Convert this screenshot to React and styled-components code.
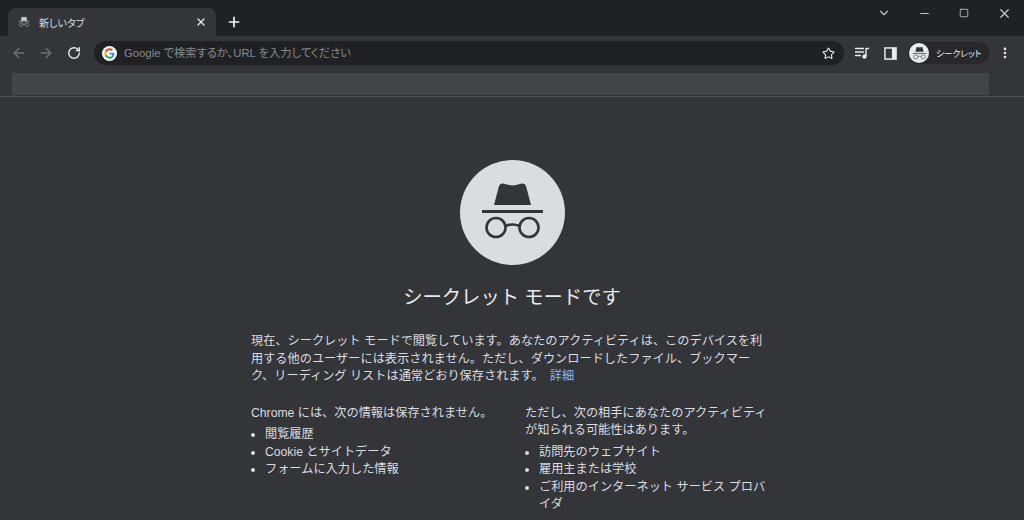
import styled, { createGlobalStyle } from 'styled-components';
import { ArrowLeft, ArrowRight, RotateCw, X, Plus, ChevronDown, Minus, Square, Star, MoreVertical } from 'lucide-react';

const GlobalStyle = createGlobalStyle`
  html, body {
    margin: 0;
    padding: 0;
    background: #343538;
  }
  body {
    font-family: "Liberation Sans", "Noto Sans CJK JP", sans-serif;
  }
`;

const Window = styled.div`
  width: 1024px;
  height: 520px;
  overflow: hidden;
  display: flex;
  flex-direction: column;
  background: #343538;
`;

// Title strip
const TabStrip = styled.div`
  height: 36px;
  flex-shrink: 0;
  background: #202124;
  display: flex;
  align-items: flex-end;
  padding-left: 8px;
`;

const Tab = styled.div`
  width: 208px;
  height: 28px;
  box-sizing: border-box;
  background: #343538;
  border-radius: 8px 8px 0 0;
  display: flex;
  align-items: center;
  padding: 0 9px 0 10px;
  gap: 9px;
`;

const TabTitle = styled.span`
  flex: 1;
  font-size: 10px;
  font-feature-settings: "palt";
  color: #dadce0;
`;

const NewTab = styled.div`
  width: 28px;
  height: 28px;
  margin-left: 4px;
  display: flex;
  align-items: center;
  justify-content: center;
  color: #f1f3f4;
`;

const WindowControls = styled.div`
  margin-left: auto;
  align-self: flex-start;
  display: flex;
  color: #c4c7c9;
`;

const WindowButton = styled.div`
  width: 40px;
  height: 26px;
  display: flex;
  align-items: center;
  justify-content: center;
`;

// Toolbar
const Toolbar = styled.div`
  height: 34px;
  flex-shrink: 0;
  display: flex;
  align-items: center;
  padding-left: 5px;
`;

const NavButton = styled.div`
  width: 27.5px;
  height: 28px;
  display: flex;
  align-items: center;
  justify-content: center;
  color: ${({ $disabled }) => ($disabled ? '#6f7276' : '#e8eaed')};
`;

const Omnibox = styled.div`
  width: 750px;
  height: 24px;
  margin-left: 6.5px;
  margin-right: 4px;
  box-sizing: border-box;
  border-radius: 12px;
  background: #202124;
  display: flex;
  align-items: center;
  padding: 0 9px 0 8px;
  gap: 7px;
`;

const OmniboxText = styled.span`
  flex: 1;
  padding-bottom: 2px;
  font-size: 11.3px;
  font-feature-settings: "palt";
  color: #85888c;
  white-space: nowrap;
`;

const ToolIcon = styled.div`
  width: 28px;
  height: 26px;
  flex-shrink: 0;
  display: flex;
  align-items: center;
  justify-content: center;
  color: #e8eaed;
`;

const ProfileChip = styled.div`
  height: 22px;
  width: 81px;
  margin: 0 2px 0 4px;
  box-sizing: border-box;
  border-radius: 11px;
  background: #27282b;
  display: flex;
  align-items: center;
  gap: 7px;
`;

const ProfileAvatar = styled.div`
  width: 20px;
  height: 20px;
  margin-left: 1px;
  border-radius: 50%;
  background: #e8eaed;
  display: flex;
  align-items: center;
  justify-content: center;
  flex-shrink: 0;
`;

const ProfileName = styled.span`
  font-size: 8.7px;
  font-feature-settings: "palt";
  color: #e8eaed;
  white-space: nowrap;
`;

// Bookmark bar
const BookmarkBar = styled.div`
  height: 27px;
  flex-shrink: 0;
  box-sizing: border-box;
  padding: 3px 35px 1px 12px;
  border-bottom: 1px solid #4d4e51;
`;

const BookmarkPlaceholder = styled.div`
  height: 22px;
  background: #434447;
`;

// Page
const Page = styled.main`
  flex: 1;
  display: flex;
  flex-direction: column;
  align-items: center;
  padding-top: 63px;
`;

const HeroCircle = styled.div`
  width: 105px;
  height: 105px;
  border-radius: 50%;
  background: #dadce0;
  display: flex;
  align-items: center;
  justify-content: center;
`;

const Title = styled.h1`
  margin: 19px 0 0;
  font-size: 19.3px;
  line-height: 28px;
  font-weight: 400;
  color: #e8eaed;
`;

const Content = styled.div`
  width: 522px;
  margin-top: 21px;
  font-size: 12.2px;
  line-height: 17.5px;
  color: #dadce0;
`;

const Intro = styled.p`
  margin: 0;
  width: 516px;
`;

const Link = styled.a`
  color: #8ab4f8;
  margin-left: 6px;
`;

const Columns = styled.div`
  display: grid;
  grid-template-columns: 274px 248px;
  margin-top: 19px;
`;

const Lead = styled.div`
  margin-bottom: 4px;
`;

const BulletList = styled.ul`
  margin: 0;
  padding: 0 0 0 14px;
`;

const Bullet = styled.li`
  padding: 0;
`;

const SpyIcon = ({ size, color = '#343538' }) => (
  <svg width={size} height={size} viewBox="19 19 67 67" fill="none">
    <path d="M34 45 L39 26 Q40 23 43 23.500 L49 25 Q52.500 25.800 56 25 L62 23.500 Q65 23 66 26 L71 45 Z" fill={color} />
    <rect x="22" y="50" width="61" height="3" fill={color} />
    <circle cx="36" cy="67.500" r="9.500" stroke={color} strokeWidth="2.600" />
    <circle cx="69" cy="67.500" r="9.500" stroke={color} strokeWidth="2.600" />
    <path d="M45.500 66 Q52.500 63 59.500 66" stroke={color} strokeWidth="2.600" />
  </svg>
);

const GoogleG = () => (
  <svg width="15" height="15" viewBox="0 0 48 48">
    <circle cx="24" cy="24" r="24" fill="#fff" />
    <g transform="translate(7.2 7.2) scale(.7)">
      <path fill="#ea4335" d="M24 9.5c3.5 0 6.700 1.200 9.200 3.600l6.900-6.900C35.900 2.400 30.500 0 24 0 14.600 0 6.500 5.400 2.600 13.200l8 6.200C12.400 13.700 17.700 9.500 24 9.500z" />
      <path fill="#4285f4" d="M46.900 24.500c0-1.600-.1-3.100-.4-4.500H24v9h12.900c-.6 3-2.200 5.500-4.800 7.200l7.700 6c4.500-4.200 7.100-10.300 7.100-17.700z" />
      <path fill="#fbbc05" d="M10.500 28.600c-.5-1.400-.8-3-.8-4.600s.3-3.200.8-4.600l-8-6.200C.9 16.500 0 20.100 0 24s.9 7.500 2.600 10.800l7.900-6.200z" />
      <path fill="#34a853" d="M24 48c6.500 0 11.900-2.100 15.900-5.800l-7.700-6c-2.200 1.400-4.900 2.300-8.200 2.300-6.300 0-11.600-4.200-13.500-9.900l-8 6.200C6.500 42.600 14.600 48 24 48z" />
    </g>
  </svg>
);

const MediaIcon = () => (
  <svg width="16" height="16" viewBox="0 0 16 16" fill="none" stroke="#e8eaed" strokeWidth="1.4">
    <path d="M1 3.500h9M1 7h9M1 10.500h6" />
    <path d="M12 3v8" />
    <path d="M12 3.500h3" />
    <circle cx="10.500" cy="11.500" r="1.500" fill="#e8eaed" />
  </svg>
);

const SidePanelIcon = () => (
  <svg width="13" height="13" viewBox="0 0 14 14" fill="none">
    <rect x="1" y="1" width="12" height="12" stroke="#e8eaed" strokeWidth="1.6" />
    <rect x="8.500" y="1" width="4.500" height="12" fill="#e8eaed" />
  </svg>
);

const leftItems = ['閲覧履歴', 'Cookie とサイトデータ', 'フォームに入力した情報'];
const rightItems = ['訪問先のウェブサイト', '雇用主または学校', 'ご利用のインターネット サービス プロバイダ'];

export default function App() {
  return (
    <>
      <GlobalStyle />
      <Window>
        <TabStrip>
          <Tab>
            <SpyIcon size={12} color="#c8cacd" />
            <TabTitle>新しいタブ</TabTitle>
            <X size={12} color="#e8eaed" strokeWidth={2.5} />
          </Tab>
          <NewTab>
            <Plus size={16} strokeWidth={2.5} />
          </NewTab>
          <WindowControls>
            <WindowButton><ChevronDown size={14} /></WindowButton>
            <WindowButton><Minus size={13} /></WindowButton>
            <WindowButton><Square size={10} /></WindowButton>
            <WindowButton><X size={15} /></WindowButton>
          </WindowControls>
        </TabStrip>

        <Toolbar>
          <NavButton $disabled><ArrowLeft size={16} /></NavButton>
          <NavButton $disabled><ArrowRight size={16} /></NavButton>
          <NavButton><RotateCw size={14} strokeWidth={2.4} /></NavButton>
          <Omnibox>
            <GoogleG />
            <OmniboxText>Google で検索するか、URL を入力してください</OmniboxText>
            <Star size={13} color="#e8eaed" />
          </Omnibox>
          <ToolIcon><MediaIcon /></ToolIcon>
          <ToolIcon><SidePanelIcon /></ToolIcon>
          <ProfileChip>
            <ProfileAvatar><SpyIcon size={15} /></ProfileAvatar>
            <ProfileName>シークレット</ProfileName>
          </ProfileChip>
          <ToolIcon><MoreVertical size={14} strokeWidth={2.6} /></ToolIcon>
        </Toolbar>

        <BookmarkBar>
          <BookmarkPlaceholder />
        </BookmarkBar>

        <Page>
          <HeroCircle>
            <SpyIcon size={67} />
          </HeroCircle>
          <Title>シークレット モードです</Title>
          <Content>
            <Intro>
              現在、シークレット モードで閲覧しています。あなたのアクティビティは、このデバイスを利用する他のユーザーには表示されません。ただし、ダウンロードしたファイル、ブックマーク、リーディング リストは通常どおり保存されます。
              <Link>詳細</Link>
            </Intro>
            <Columns>
              <div>
                <Lead>Chrome には、次の情報は保存されません。</Lead>
                <BulletList>
                  {leftItems.map((item) => <Bullet key={item}>{item}</Bullet>)}
                </BulletList>
              </div>
              <div>
                <Lead>ただし、次の相手にあなたのアクティビティが知られる可能性はあります。</Lead>
                <BulletList>
                  {rightItems.map((item) => <Bullet key={item}>{item}</Bullet>)}
                </BulletList>
              </div>
            </Columns>
          </Content>
        </Page>
      </Window>
    </>
  );
}
